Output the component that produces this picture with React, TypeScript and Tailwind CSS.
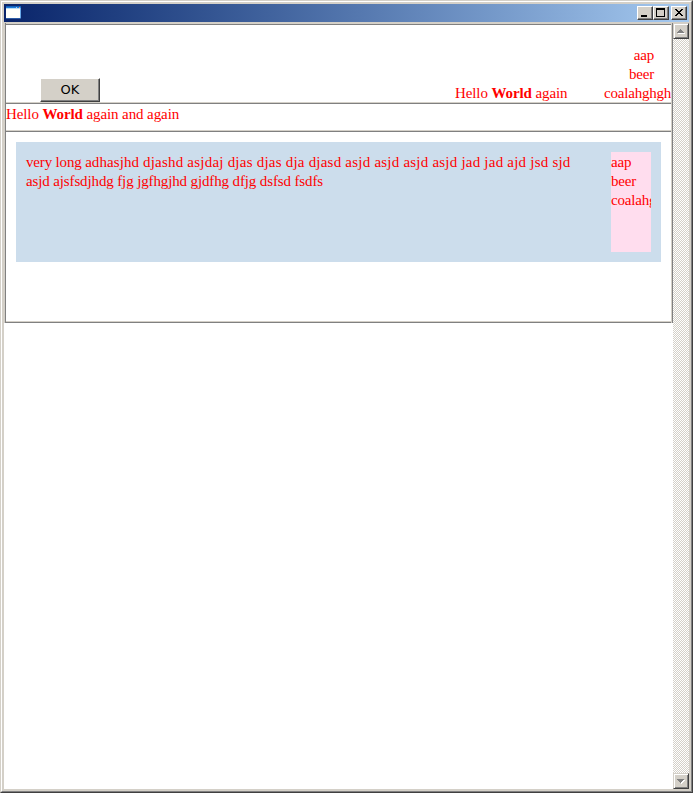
import type { ReactNode } from "react";

function Caption({ children, className = "" }: { children: ReactNode; className?: string }) {
  return (
    <button
      className={`flex h-[14px] w-4 items-start border border-t-white border-l-white border-r-[#404040] border-b-[#404040] bg-[#d4d0c8] shadow-[inset_-1px_-1px_0_#808080] ${className}`}
    >
      <svg width="14" height="12" shapeRendering="crispEdges">
        {children}
      </svg>
    </button>
  );
}

function TitleBar() {
  return (
    <div className="flex h-[18px] items-start bg-linear-to-r from-[#0a246a] to-[#a6caf0] pt-0.5 pr-0.5 pl-0.5">
      <svg width="16" height="14" shapeRendering="crispEdges">
        <rect width="15" height="13" fill="#207ad8" />
        <rect width="15" height="1" fill="#1260b8" />
        <rect y="2" width="14" height="10" fill="#fffffa" />
        <rect y="2" width="14" height="1" fill="#b8dcf4" />
        <rect x="10" y="1" width="1" height="1" fill="#9cc8f8" />
        <rect x="13" y="1" width="1" height="1" fill="#e09070" />
        <rect x="14" y="2" width="1" height="11" fill="#68a8e8" />
        <rect y="12" width="15" height="1" fill="#2c5ca4" />
      </svg>
      <div className="ml-auto flex">
        <Caption>
          <rect x="3" y="8" width="6" height="2" />
        </Caption>
        <Caption>
          <path d="M2 1h9v9h-9zM3 3v6h7v-6z" fillRule="evenodd" />
        </Caption>
        <Caption className="ml-0.5">
          <path d="M3 2h2v1h1v1h2v-1h1v-1h2v1h-1v1h-1v1h-1v1h1v1h1v1h1v1h-2v-1h-1v-1h-2v1h-1v1h-2v-1h1v-1h1v-1h1v-1h-1v-1h-1v-1h-1z" />
        </Caption>
      </div>
    </div>
  );
}

function ScrollButton({ down = false }: { down?: boolean }) {
  return (
    <button className="h-4 w-4 shrink-0 border border-t-[#d4d0c8] border-l-[#d4d0c8] border-r-[#404040] border-b-[#404040] bg-[#d4d0c8] shadow-[inset_1px_1px_0_#fff,inset_-1px_-1px_0_#808080]">
      <svg width="14" height="14" shapeRendering="crispEdges">
        {down ? (
          <>
            <path d="M4 6h7v1h-1v1h-1v1h-1v1h-1v-1h-1v-1h-1v-1h-1z" fill="#fff" />
            <path d="M3 5h7v1h-1v1h-1v1h-1v1h-1v-1h-1v-1h-1v-1h-1z" fill="#808080" />
          </>
        ) : (
          <>
            <path d="M4 9h7v1h-7z" fill="#fff" />
            <path d="M6 5h1v1h1v1h1v1h1v1h-7v-1h1v-1h1v-1h1z" fill="#808080" />
          </>
        )}
      </svg>
    </button>
  );
}

function Rule() {
  return <div className="h-0.5 shrink-0 border-t border-b border-t-[#d4d0c8] border-b-[#808080]" />;
}

export default function App() {
  return (
    <div className="h-[793px] w-[693px] overflow-hidden border border-t-[#d4d0c8] border-l-[#d4d0c8] border-r-[#404040] border-b-[#404040] bg-[#d4d0c8]">
      <div className="flex h-full flex-col border border-t-white border-l-white border-r-[#808080] border-b-[#808080] p-0.5">
        <TitleBar />
        <div className="mt-px flex min-h-0 flex-1 bg-white">
          <main className="w-[669px] font-['Liberation_Serif','Times_New_Roman',serif] text-[15px] leading-[19px] tracking-[-0.1px] whitespace-nowrap text-[#ff0000]">
            <div className="h-[300px] border-r border-l border-r-[#808080] border-l-[#d4d0c8]">
              <div className="flex h-full flex-col border-r border-l border-r-[#d4d0c8] border-l-[#808080]">
                <Rule />
                <section className="flex h-[77px] items-end overflow-hidden">
                  <button className="ml-[34px] h-6 w-[60px] shrink-0 border border-t-white border-l-white border-r-[#404040] border-b-[#404040] bg-[#d4d0c8] pb-px font-['DejaVu_Sans',sans-serif] text-[13px] leading-5 tracking-normal text-black shadow-[inset_-1px_-1px_0_#808080]">
                    OK
                  </button>
                  <p className="-mb-px ml-[355px] w-[112px] shrink-0">
                    Hello <b>World</b> again
                  </p>
                  <p className="-mb-px ml-[37px] w-[50px] shrink-0 text-right tracking-[-0.2px]">
                    aap
                    <br />
                    beer
                    <br />
                    coalahghgh
                  </p>
                </section>
                <Rule />
                <section className="h-[26px] pt-px">
                  Hello <b>World</b> again and again
                </section>
                <Rule />
                <section className="flex-1 p-2.5">
                  <div className="flex h-[120px] justify-between bg-[#ccddec] p-2.5 pt-[11px]">
                    <p>
                      <span className="tracking-[-0.17px]">very long </span>
                      <span className="tracking-[0.08px]">adhasjhd </span>
                      <span className="tracking-[0.22px]">
                        djashd asjdaj djas djas dja djasd asjd asjd asjd asjd jad jad ajd jsd sjd
                      </span>
                      <br />
                      <span className="tracking-[-0.13px]">asjd ajsfsdjhdg fjg jgfhgjhd gjdfhg dfjg dsfsd fsdfs</span>
                    </p>
                    <p className="-mt-px h-[100px] w-10 overflow-hidden bg-[#ffddee] pt-px tracking-[-0.2px]">
                      aap
                      <br />
                      beer
                      <br />
                      coalahghgh
                    </p>
                  </div>
                </section>
                <Rule />
              </div>
            </div>
          </main>
          <aside className="flex w-4 flex-col bg-[repeating-conic-gradient(#d4d0c8_0_25%,#fff_0_50%)] bg-size-[2px_2px]">
            <ScrollButton />
            <div className="flex-1" />
            <ScrollButton down />
          </aside>
        </div>
      </div>
    </div>
  );
}
